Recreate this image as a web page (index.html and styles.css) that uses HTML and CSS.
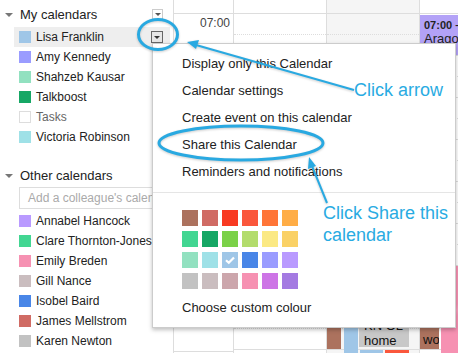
FILE: index.html
```html
<!DOCTYPE html>
<html lang="en">
<head>
    <meta charset="UTF-8">
    <title>Share this Calendar</title>
    <link rel="stylesheet" href="styles.css">
</head>
<body>
    <div class="page">
        <div class="sidebar">
            <div class="cal-header">
                <span class="caret"></span>
                <span class="cal-title">My calendars</span>
                <span class="drop-btn"></span>
            </div>
            <div class="cal-item active">
                <span class="swatch" style="background:#9fc6e7"></span>Lisa Franklin
                <span class="drop-btn dark"></span>
            </div>
            <div class="cal-item"><span class="swatch" style="background:#9a9cff"></span>Amy Kennedy</div>
            <div class="cal-item"><span class="swatch" style="background:#92e1c0"></span>Shahzeb Kausar</div>
            <div class="cal-item"><span class="swatch" style="background:#16a765"></span>Talkboost</div>
            <div class="cal-item muted"><span class="swatch empty"></span>Tasks</div>
            <div class="cal-item"><span class="swatch" style="background:#9fe1e7"></span>Victoria Robinson</div>

            <div class="cal-header other">
                <span class="caret"></span>
                <span class="cal-title">Other calendars</span>
            </div>
            <div class="add-box">Add a colleague's calendar</div>
            <div class="cal-item"><span class="swatch" style="background:#b99aff"></span>Annabel Hancock</div>
            <div class="cal-item"><span class="swatch" style="background:#42d692"></span>Clare Thornton-Jones</div>
            <div class="cal-item"><span class="swatch" style="background:#f691b2"></span>Emily Breden</div>
            <div class="cal-item"><span class="swatch" style="background:#cabdbf"></span>Gill Nance</div>
            <div class="cal-item"><span class="swatch" style="background:#4986e7"></span>Isobel Baird</div>
            <div class="cal-item"><span class="swatch" style="background:#d06b64"></span>James Mellstrom</div>
            <div class="cal-item"><span class="swatch" style="background:#c2c2c2"></span>Karen Newton</div>
        </div>

        <div class="grid">
            <div class="col time-col">
                <div class="col-head"></div>
                <div class="slot"><span class="time">07:00</span></div>
                <div class="slot"></div>
                <div class="slot"></div>
                <div class="slot"></div>
                <div class="slot"></div>
                <div class="slot"></div>
                <div class="slot"></div>
                <div class="slot"></div>
            </div>
            <div class="col day-col">
                <div class="col-head"></div>
                <div class="slot half"></div>
                <div class="slot half"></div>
                <div class="slot half"></div>
                <div class="slot half"></div>
                <div class="slot half"></div>
                <div class="slot half"></div>
                <div class="slot half"></div>
                <div class="slot half"></div>
            </div>
            <div class="col day-col today">
                <div class="col-head"></div>
                <div class="slot half"></div>
                <div class="slot half"></div>
                <div class="slot half"></div>
                <div class="slot half"></div>
                <div class="slot half"></div>
                <div class="slot half"></div>
                <div class="slot half"></div>
                <div class="slot half"></div>
                <div class="event hatch" style="left:0;width:14px;top:266px;height:83px;background-color:#ac725e"></div>
                <div class="event" style="left:17px;width:14px;top:266px;height:90px;background-color:#9fc6e7"></div>
                <div class="event grey hatch" style="left:32px;width:50px;top:266px;height:81px">KN OL<br>home</div>
                <div class="event" style="left:33px;width:23px;top:350px;height:10px;background-color:#9fc6e7"></div>
                <div class="event" style="left:58px;width:24px;top:350px;height:10px;background-color:#fa573c"></div>
            </div>
            <div class="col day-col last">
                <div class="col-head"></div>
                <div class="slot half"></div>
                <div class="slot half"></div>
                <div class="slot half"></div>
                <div class="slot half"></div>
                <div class="slot half"></div>
                <div class="slot half"></div>
                <div class="slot half"></div>
                <div class="slot half"></div>
                <div class="event purple" style="left:0;width:60px;top:15px;height:40px"><b>07:00 –</b><br>Arago</div>
                <div class="event brown hatch" style="left:0;width:19px;top:266px;height:83px">wo</div>
                <div class="event hatch" style="left:21px;width:30px;top:266px;height:90px;background-color:#f691b2"></div>
            </div>
        </div>
    </div>

    <div class="menu">
        <div class="menu-item">Display only this Calendar</div>
        <div class="menu-item">Calendar settings</div>
        <div class="menu-item">Create event on this calendar</div>
        <div class="menu-item">Share this Calendar</div>
        <div class="menu-item">Reminders and notifications</div>
        <div class="menu-sep"></div>
        <div class="palette">
            <span style="background:#ac725e"></span>
            <span style="background:#d06b64"></span>
            <span style="background:#f83a22"></span>
            <span style="background:#fa573c"></span>
            <span style="background:#ff7537"></span>
            <span style="background:#ffad46"></span>
            <span style="background:#42d692"></span>
            <span style="background:#16a765"></span>
            <span style="background:#7bd148"></span>
            <span style="background:#b3dc6c"></span>
            <span style="background:#fbe983"></span>
            <span style="background:#fad165"></span>
            <span style="background:#92e1c0"></span>
            <span style="background:#9fe1e7"></span>
            <span class="checked" style="background:#9fc6e7">
                <svg width="16" height="16" viewBox="0 0 16 16"><path d="M4 8.2 L6.8 10.8 L12 5.4" fill="none" stroke="#fff" stroke-width="2.2"/></svg>
            </span>
            <span style="background:#4986e7"></span>
            <span style="background:#9a9cff"></span>
            <span style="background:#b99aff"></span>
            <span style="background:#c2c2c2"></span>
            <span style="background:#cabdbf"></span>
            <span style="background:#cca6ac"></span>
            <span style="background:#f691b2"></span>
            <span style="background:#cd74e6"></span>
            <span style="background:#a47ae2"></span>
        </div>
        <div class="menu-item custom">Choose custom colour</div>
    </div>

    <svg class="marks" width="458" height="353" viewBox="0 0 458 353">
        <ellipse cx="158" cy="34.5" rx="19.5" ry="15" fill="none" stroke="#29a9e1" stroke-width="3"/>
        <ellipse cx="241" cy="143" rx="82" ry="17" fill="none" stroke="#29a9e1" stroke-width="3"/>
        <line x1="354" y1="90" x2="196" y2="45" stroke="#29a9e1" stroke-width="2"/>
        <path d="M187 42 L199 40 L196 49 Z" fill="#29a9e1"/>
        <line x1="327" y1="203" x2="312" y2="166" stroke="#29a9e1" stroke-width="2"/>
        <path d="M309 157 L308 169 L316 166 Z" fill="#29a9e1"/>
    </svg>
    <div class="note note-arrow">Click arrow</div>
    <div class="note note-share">Click Share this<br>calendar</div>
</body>
</html>
```

FILE: styles.css
```css
body {
    margin: 0;
    font-family: "Liberation Sans", Arial, sans-serif;
    color: #222;
    background: #fff;
    width: 458px;
    height: 353px;
    overflow: hidden;
    position: relative;
}
.page {
    display: flex;
    height: 353px;
}
.sidebar {
    width: 173px;
    flex-shrink: 0;
    padding-top: 4px;
    box-sizing: border-box;
}
.cal-header {
    display: flex;
    align-items: center;
    height: 20px;
    font-size: 13px;
    position: relative;
}
.cal-header.other {
    margin-top: 18px;
}
.caret {
    width: 0;
    height: 0;
    border-left: 4px solid transparent;
    border-right: 4px solid transparent;
    border-top: 4px solid #777;
    margin: 1px 7px 0 5px;
}
.drop-btn {
    position: absolute;
    left: 152px;
    top: 5px;
    width: 9px;
    height: 9px;
    border: 1px solid #ccc;
    background: #fff;
}
.drop-btn::after {
    content: "";
    position: absolute;
    left: 2px;
    top: 3px;
    border-left: 3px solid transparent;
    border-right: 3px solid transparent;
    border-top: 3px solid #555;
}
.drop-btn.dark {
    left: 137px;
    top: 4px;
    width: 10px;
    height: 10px;
    border-color: #666;
    background: #e6e6e6;
}
.drop-btn.dark::after {
    left: 2px;
    top: 4px;
    border-top-color: #333;
}
.cal-item {
    display: flex;
    align-items: center;
    height: 20px;
    font-size: 12px;
    margin-left: 14px;
    padding-left: 5px;
    width: 151px;
    position: relative;
    white-space: nowrap;
}
.cal-item.active {
    background: #eee;
    margin-top: 3px;
}
.cal-item.muted {
    color: #666;
}
.swatch {
    width: 12px;
    height: 12px;
    margin-right: 5px;
    flex-shrink: 0;
}
.swatch.empty {
    border: 1px solid #ddd;
    width: 10px;
    height: 10px;
}
.add-box {
    margin: 2px 0 2px 19px;
    height: 20px;
    border: 1px solid #ddd;
    font-size: 12px;
    color: #aaa;
    line-height: 20px;
    padding-left: 8px;
    white-space: nowrap;
    overflow: hidden;
    width: 150px;
}
.grid {
    flex: 1;
    display: flex;
    border-left: 1px solid #ddd;
    overflow: hidden;
}
.col {
    position: relative;
    border-right: 1px solid #ddd;
    flex-shrink: 0;
}
.time-col {
    width: 59px;
}
.day-col {
    width: 92px;
}
.day-col.today {
    background: #f5f5f5;
}
.day-col.last {
    border-right: none;
    width: 60px;
}
.col-head {
    height: 14px;
    border-bottom: 1px solid #ddd;
    box-sizing: border-box;
}
.slot {
    height: 42px;
    border-bottom: 1px solid #ddd;
    box-sizing: border-box;
    position: relative;
}
.slot.half::after {
    content: "";
    position: absolute;
    left: 0;
    right: 0;
    top: 20px;
    border-top: 1px dotted #ddd;
}
.time {
    display: block;
    text-align: right;
    padding-right: 3px;
    font-size: 12px;
    color: #444;
    margin-top: 2px;
}
.event {
    position: absolute;
    font-size: 13px;
    line-height: 15px;
    overflow: hidden;
    box-sizing: border-box;
    white-space: nowrap;
}
.event.hatch {
    background-image: linear-gradient(135deg, transparent 45%, rgba(255,255,255,.12) 50%, transparent 55%);
}
.event.grey {
    background-color: #c8c8c8;
    padding: 52px 0 0 5px;
    color: #111;
}
.event.purple {
    background: #b3a2f7;
    padding: 3px 0 0 4px;
    font-size: 13px;
    line-height: 14px;
}
.event.purple b {
    font-size: 11px;
}
.event.brown {
    background-color: #ac725e;
    padding: 66px 0 0 3px;
    color: #111;
}
.menu {
    position: absolute;
    left: 152px;
    top: 43px;
    width: 304px;
    height: 285px;
    box-sizing: border-box;
    background: #fff;
    border: 1px solid #ccc;
    box-shadow: 0 2px 4px rgba(0,0,0,.25);
    padding-top: 6px;
}
.menu-item {
    font-size: 13px;
    line-height: 27px;
    padding-left: 29px;
    color: #222;
}
.menu-sep {
    border-top: 1px solid #e5e5e5;
    margin-top: 7px;
}
.palette {
    display: grid;
    grid-template-columns: repeat(6, 16px);
    grid-auto-rows: 16px;
    column-gap: 4px;
    row-gap: 5px;
    padding: 17px 0 0 29px;
}
.palette span {
    display: block;
}
.palette svg {
    display: block;
}
.menu-item.custom {
    margin-top: 5px;
}
.marks {
    position: absolute;
    left: 0;
    top: 0;
    pointer-events: none;
    filter: drop-shadow(0 1px 1px rgba(0,0,0,.2));
}
.note {
    position: absolute;
    font-size: 18px;
    line-height: 22px;
    color: #29abe2;
}
.note-arrow {
    left: 354px;
    top: 79px;
}
.note-share {
    left: 323px;
    top: 202px;
}
```
